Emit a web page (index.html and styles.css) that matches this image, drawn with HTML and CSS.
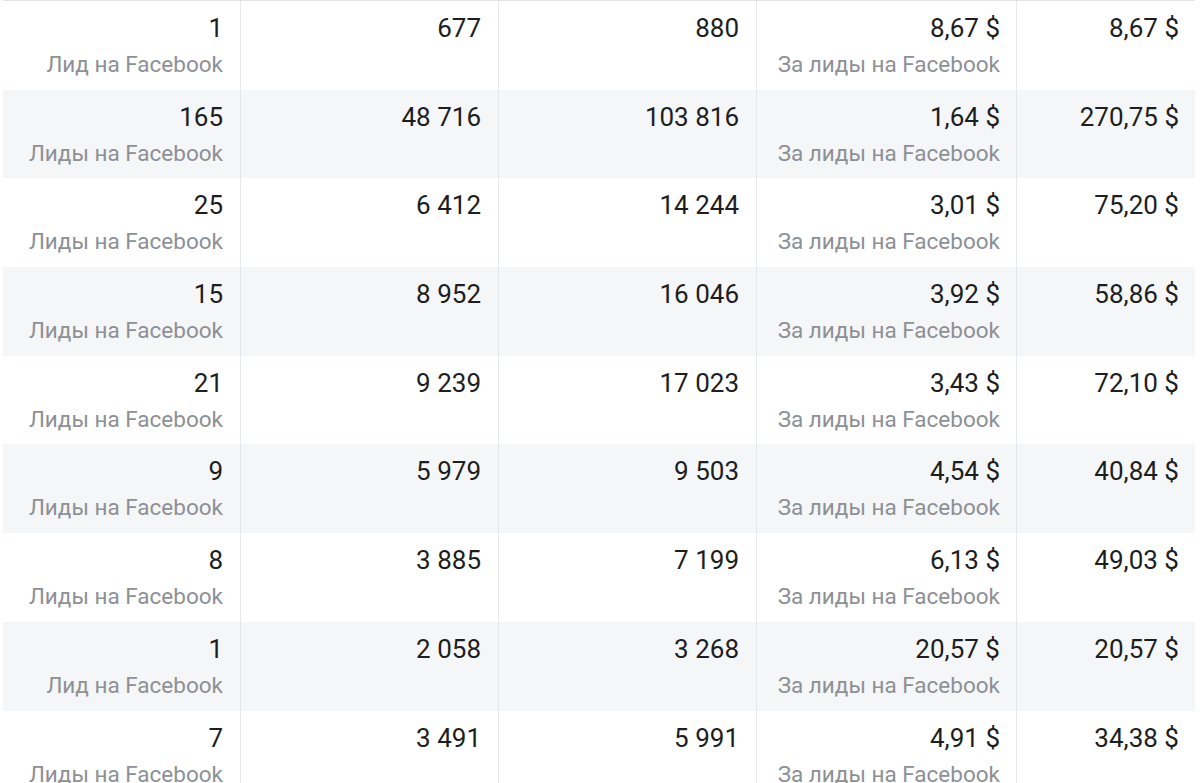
FILE: index.html
```html
<!DOCTYPE html>
<html lang="ru">
<head>
<meta charset="utf-8">
<link rel="stylesheet" href="styles.css">
</head>
<body>
<div class="table">
  <div class="row">
    <div class="cell"><div class="val">1</div><div class="sub">Лид на Facebook</div></div>
    <div class="cell"><div class="val">677</div></div>
    <div class="cell"><div class="val">880</div></div>
    <div class="cell cost"><div class="val">8,67 $</div><div class="sub">За лиды на Facebook</div></div>
    <div class="cell"><div class="val">8,67 $</div></div>
  </div>
  <div class="row">
    <div class="cell"><div class="val">165</div><div class="sub">Лиды на Facebook</div></div>
    <div class="cell"><div class="val">48 716</div></div>
    <div class="cell"><div class="val">103 816</div></div>
    <div class="cell cost"><div class="val">1,64 $</div><div class="sub">За лиды на Facebook</div></div>
    <div class="cell"><div class="val">270,75 $</div></div>
  </div>
  <div class="row">
    <div class="cell"><div class="val">25</div><div class="sub">Лиды на Facebook</div></div>
    <div class="cell"><div class="val">6 412</div></div>
    <div class="cell"><div class="val">14 244</div></div>
    <div class="cell cost"><div class="val">3,01 $</div><div class="sub">За лиды на Facebook</div></div>
    <div class="cell"><div class="val">75,20 $</div></div>
  </div>
  <div class="row">
    <div class="cell"><div class="val">15</div><div class="sub">Лиды на Facebook</div></div>
    <div class="cell"><div class="val">8 952</div></div>
    <div class="cell"><div class="val">16 046</div></div>
    <div class="cell cost"><div class="val">3,92 $</div><div class="sub">За лиды на Facebook</div></div>
    <div class="cell"><div class="val">58,86 $</div></div>
  </div>
  <div class="row">
    <div class="cell"><div class="val">21</div><div class="sub">Лиды на Facebook</div></div>
    <div class="cell"><div class="val">9 239</div></div>
    <div class="cell"><div class="val">17 023</div></div>
    <div class="cell cost"><div class="val">3,43 $</div><div class="sub">За лиды на Facebook</div></div>
    <div class="cell"><div class="val">72,10 $</div></div>
  </div>
  <div class="row">
    <div class="cell"><div class="val">9</div><div class="sub">Лиды на Facebook</div></div>
    <div class="cell"><div class="val">5 979</div></div>
    <div class="cell"><div class="val">9 503</div></div>
    <div class="cell cost"><div class="val">4,54 $</div><div class="sub">За лиды на Facebook</div></div>
    <div class="cell"><div class="val">40,84 $</div></div>
  </div>
  <div class="row">
    <div class="cell"><div class="val">8</div><div class="sub">Лиды на Facebook</div></div>
    <div class="cell"><div class="val">3 885</div></div>
    <div class="cell"><div class="val">7 199</div></div>
    <div class="cell cost"><div class="val">6,13 $</div><div class="sub">За лиды на Facebook</div></div>
    <div class="cell"><div class="val">49,03 $</div></div>
  </div>
  <div class="row">
    <div class="cell"><div class="val">1</div><div class="sub">Лид на Facebook</div></div>
    <div class="cell"><div class="val">2 058</div></div>
    <div class="cell"><div class="val">3 268</div></div>
    <div class="cell cost"><div class="val">20,57 $</div><div class="sub">За лиды на Facebook</div></div>
    <div class="cell"><div class="val">20,57 $</div></div>
  </div>
  <div class="row">
    <div class="cell"><div class="val">7</div><div class="sub">Лиды на Facebook</div></div>
    <div class="cell"><div class="val">3 491</div></div>
    <div class="cell"><div class="val">5 991</div></div>
    <div class="cell cost"><div class="val">4,91 $</div><div class="sub">За лиды на Facebook</div></div>
    <div class="cell"><div class="val">34,38 $</div></div>
  </div>
</div>
</body>
</html>
```
FILE: styles.css
```css
html, body {
  margin: 0;
  padding: 0;
  background: #ffffff;
  overflow: hidden;
}
body {
  font-family: Roboto, "Noto Sans", Arial, sans-serif;
  color: #1d1e21;
}
.table {
  margin-left: 3px;
  width: 1192px;
  border-top: 1px solid #e4e5e8;
}
.row {
  display: grid;
  grid-template-columns: 238px 258px 258px 260px 178px;
  height: 88.7px;
}
.row:nth-child(even) {
  background: #f5f6f7;
}
.cell {
  border-right: 1px solid #e6e7ea;
  padding: 9px 17px 0 0;
  text-align: right;
  box-sizing: border-box;
}
.cell.cost {
  padding-right: 16px;
}
.cell:last-child {
  border-right: none;
  padding-right: 16px;
}
.val {
  font-size: 26px;
  line-height: 36px;
  white-space: nowrap;
}
.sub {
  font-size: 22.5px;
  line-height: 37px;
  color: #8d9095;
  white-space: nowrap;
}
```
